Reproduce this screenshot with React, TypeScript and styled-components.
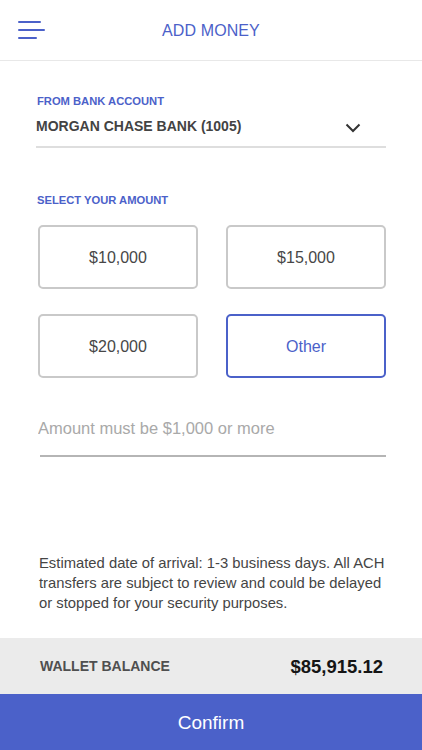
import React, { useState } from "react";
import styled, { createGlobalStyle } from "styled-components";

const Global = createGlobalStyle`
  html, body { margin: 0; padding: 0; background: #fff; }
  body { font-family: "Liberation Sans", Arial, sans-serif; }
  * { box-sizing: border-box; }
`;

const BLUE = "#4b61c9";

const Page = styled.div`
  width: 422px;
  height: 750px;
  display: flex;
  flex-direction: column;
  background: #fff;
  overflow: hidden;
`;

const Header = styled.header`
  position: relative;
  height: 61px;
  flex: none;
  display: flex;
  align-items: center;
  justify-content: center;
  border-bottom: 1px solid #e8e8e8;
`;

const MenuButton = styled.button`
  position: absolute;
  left: 18px;
  top: 20px;
  width: 28px;
  height: 20px;
  border: none;
  background: none;
  display: flex;
  flex-direction: column;
  justify-content: space-between;
  align-items: flex-start;
  padding: 1px 0;
`;

const MenuLine = styled.span<{ $w: number }>`
  display: block;
  height: 2px;
  width: ${(p) => p.$w}px;
  background: ${BLUE};
  border-radius: 1px;
`;

const Title = styled.h1`
  margin: 0;
  font-size: 16px;
  font-weight: 400;
  color: ${BLUE};
  letter-spacing: 0.1px;
  line-height: 20px;
  transform: translateY(1px);
`;

const Main = styled.main`
  flex: 1;
  display: flex;
  flex-direction: column;
`;

const Section = styled.section`
  padding: 0 36px;
`;

const Label = styled.div<{ $top: number }>`
  margin-top: ${(p) => p.$top}px;
  padding-left: 1px;
  font-size: 11.2px;
  line-height: 14px;
  font-weight: 700;
  color: ${BLUE};
`;

const SelectRow = styled.div`
  margin-top: 9px;
  display: flex;
  align-items: center;
  justify-content: space-between;
  padding-bottom: 11px;
  border-bottom: 2px solid #dedede;
`;

const BankName = styled.span`
  font-size: 14px;
  line-height: 18px;
  font-weight: 700;
  color: #434343;
`;

const Chevron = styled.svg`
  margin-right: 25px;
  margin-top: 3px;
`;

const Grid = styled.div`
  margin-top: 18px;
  padding: 0 1px 0 2px;
  display: grid;
  grid-template-columns: 160px 160px;
  column-gap: 28px;
  row-gap: 25px;
`;

const AmountBox = styled.button<{ $active: boolean }>`
  height: 64px;
  border-radius: 5px;
  border: 2px solid ${(p) => (p.$active ? BLUE : "#c9c9c9")};
  background: #fff;
  font-family: inherit;
  font-size: 16px;
  padding-top: 2px;
  color: ${(p) => (p.$active ? BLUE : "#474747")};
  display: flex;
  align-items: center;
  justify-content: center;
  cursor: pointer;
`;

const InputWrap = styled.div`
  margin: 40px 36px 0 40px;
  border-bottom: 2px solid #b5b5b5;
  padding-bottom: 17px;
`;

const AmountInput = styled.input`
  width: 100%;
  border: none;
  outline: none;
  padding: 0;
  margin-left: -2px;
  font-family: inherit;
  font-size: 16.5px;
  line-height: 20px;
  height: 20px;
  color: #333;
  &::placeholder { color: #a9a9a9; }
`;

const Disclaimer = styled.p`
  margin: auto 0 0;
  padding: 0 33px 25px 39px;
  font-size: 14.8px;
  line-height: 20px;
  color: #454545;
`;

const BalanceBar = styled.div`
  height: 56px;
  flex: none;
  background: #ebebeb;
  display: flex;
  align-items: center;
  justify-content: space-between;
  padding: 0 39px 0 40px;
`;

const BalanceLabel = styled.span`
  font-size: 14px;
  font-weight: 700;
  color: #4f4f4f;
`;

const BalanceValue = styled.span`
  font-size: 18.5px;
  font-weight: 700;
  color: #151515;
  padding-top: 2px;
`;

const ConfirmButton = styled.button`
  height: 56px;
  flex: none;
  width: 100%;
  border: none;
  background: ${BLUE};
  color: #fff;
  font-family: inherit;
  font-size: 19px;
  padding-top: 2px;
  cursor: pointer;
`;

const amounts = ["$10,000", "$15,000", "$20,000", "Other"];

export default function App() {
  const [selected, setSelected] = useState("Other");
  return (
    <>
      <Global />
      <Page>
        <Header>
          <MenuButton aria-label="Menu">
            <MenuLine $w={23} />
            <MenuLine $w={27} />
            <MenuLine $w={19} />
          </MenuButton>
          <Title>ADD MONEY</Title>
        </Header>
        <Main>
          <Section>
            <Label $top={33}>FROM BANK ACCOUNT</Label>
            <SelectRow>
              <BankName>MORGAN CHASE BANK (1005)</BankName>
              <Chevron width="16" height="10" viewBox="0 0 16 10">
                <polyline points="1.5,1.5 8,8 14.5,1.5" fill="none" stroke="#333" strokeWidth="2" />
              </Chevron>
            </SelectRow>
            <Label $top={45}>SELECT YOUR AMOUNT</Label>
            <Grid>
              {amounts.map((a) => (
                <AmountBox key={a} $active={selected === a} onClick={() => setSelected(a)}>
                  {a}
                </AmountBox>
              ))}
            </Grid>
          </Section>
          <InputWrap>
            <AmountInput placeholder="Amount must be $1,000 or more" />
          </InputWrap>
          <Disclaimer>
            Estimated date of arrival: 1-3 business days. All ACH transfers are subject to review and could be delayed or stopped for your security purposes.
          </Disclaimer>
        </Main>
        <BalanceBar>
          <BalanceLabel>WALLET BALANCE</BalanceLabel>
          <BalanceValue>$85,915.12</BalanceValue>
        </BalanceBar>
        <ConfirmButton>Confirm</ConfirmButton>
      </Page>
    </>
  );
}
